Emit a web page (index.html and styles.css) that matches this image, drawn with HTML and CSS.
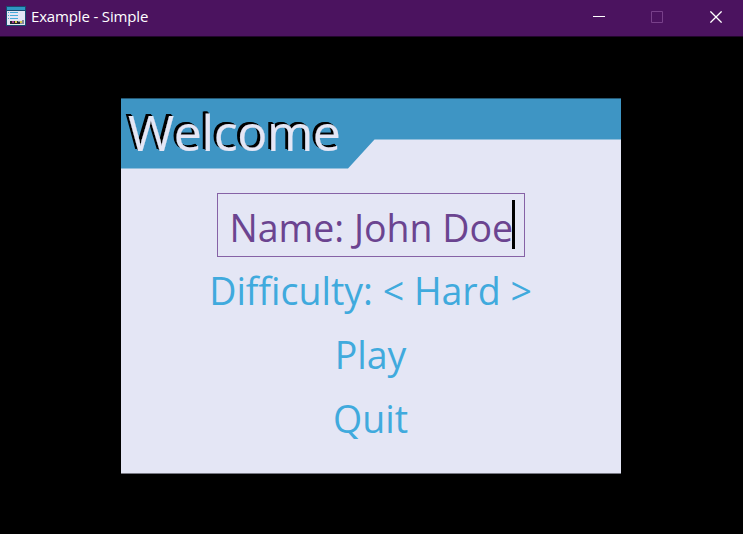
FILE: index.html
```
<!DOCTYPE html>
<html lang="en">
<head>
<meta charset="utf-8">
<title>Example - Simple</title>
<link rel="stylesheet" href="styles.css">
</head>
<body>
<header class="titlebar">
  <svg class="app-icon" width="20" height="20" viewBox="0 0 20 20" shape-rendering="crispEdges">
    <path fill="#174c70" d="M0 0h20v20H0z"/>
    <path fill="#2f97c4" d="M1 1h18v3H1z"/>
    <path fill="#e3e5f4" d="M1 5h18v14H1z"/>
    <path fill="#45abd9" d="M4 6h8v1H4zM4 9h8v1H4zM4 12h8v1H4zM2 6h1v1H2zM2 9h1v1H2zM2 12h1v1H2z"/>
    <path fill="#252530" d="M4 15h10v3H4z"/>
    <path fill="#a63a8c" d="M6 15h2v2H6z"/>
    <path fill="#d8c64a" d="M9 15h2v2H9zM14 15h2v2h-2z"/>
    <path fill="#85899b" d="M12 15h2v1h-2zM16 14h2v4h-2zM14 17h2v1h-2z"/>
  </svg>
  <span class="caption">Example - Simple</span>
  <div class="controls">
    <svg width="12" height="12" viewBox="0 0 12 12"><path d="M0 5.5h12" stroke="#fff"/></svg>
    <svg width="12" height="12" viewBox="0 0 12 12"><path d="M.5.5h11v11H.5z" fill="none" stroke="#78408a"/></svg>
    <svg width="12" height="12" viewBox="0 0 12 12"><path d="M.4.4l11.2 11.2M11.6.4L.4 11.6" stroke="#fff" stroke-width="1.3"/></svg>
  </div>
</header>
<main class="stage">
  <section class="menu">
    <div class="menu-header">
      <svg class="header-shape" width="500" height="71" viewBox="0 0 500 71"><path fill="#3e95c4" d="M0 0h500v41.5H253.500L227 70.500H0z"/><path fill="#255975" d="M0 0h500v1H0z"/></svg>
      <h1 class="title">Welcome</h1>
    </div>
    <div class="items">
      <div class="item selected"><span class="text">Name: John Doe</span><span class="cursor"></span></div>
      <div class="item"><span class="text">Difficulty: &lt; Hard &gt;</span></div>
      <div class="item"><span class="text">Play</span></div>
      <div class="item"><span class="text">Quit</span></div>
    </div>
  </section>
</main>
</body>
</html>
```
FILE: styles.css
```
* { box-sizing: border-box; }
body { margin: 0; width: 743px; height: 534px; background: #000; overflow: hidden; font-family: "Open Sans", sans-serif; }
.titlebar { height: 37px; display: flex; align-items: center; padding: 0 21px 4px 6px; background: #4b135f; border-bottom: 1px solid #21062b; }
.caption { margin-left: 5px; font-size: 15px; color: #fff; letter-spacing: -0.16px; line-height: 20px; white-space: nowrap; }
.controls { margin-left: auto; display: flex; gap: 46px; padding-top: 1px; }
.controls svg { display: block; }
.controls svg:not(:last-child) { margin-left: -1px; margin-right: 1px; }
.stage { display: flex; justify-content: center; padding: 61px 1px 0 0; }
.menu { width: 500px; height: 376px; background: #e4e6f5; border-bottom: 1px solid #777882; }
.menu-header { display: grid; height: 71px; }
.header-shape, .title { grid-area: 1 / 1; }
.title { margin: 0; padding-left: 7px; font-size: 50px; font-weight: 400; line-height: 68px; letter-spacing: -0.4px; color: #e4e6f5; -webkit-text-stroke: 0.2px #e4e6f5; text-shadow: -1px -1px #000, -2px -2px #000, -3px -2px #000; }
.items { display: flex; flex-direction: column; align-items: center; padding: 24px 1px 0 0; }
.item { height: 64px; display: flex; align-items: center; color: #40aadd; font-size: 37.5px; line-height: 62px; white-space: pre; }
.text { padding-top: 3px; }
.item.selected { width: 308px; padding-left: 12px; color: #6b4490; border: 1px solid #8662a6; }
.selected .text { padding-top: 5px; }
.cursor { width: 3px; height: 49px; background: #000; margin: -2px 0 0 -1px; }
```
